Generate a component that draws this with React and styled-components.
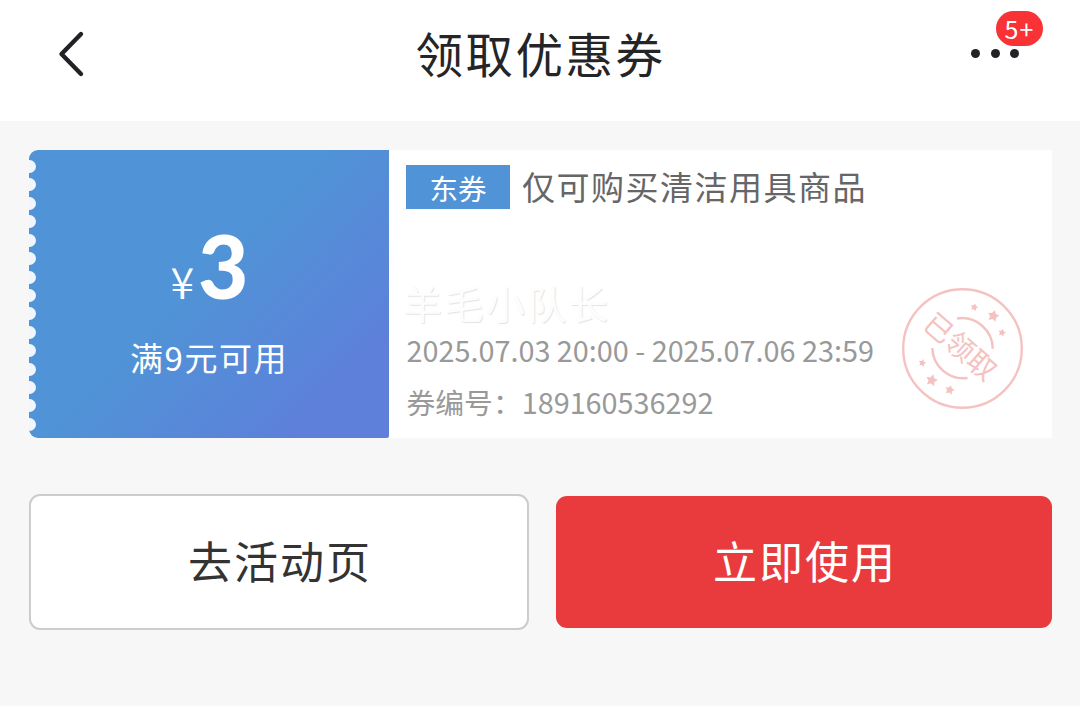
import React from "react";
import styled, { createGlobalStyle } from "styled-components";

const HOLES = 15;

const STARS = [
  { x: 84.3, y: 32.3, r: 4 },
  { x: 103.3, y: 41, r: 6.2 },
  { x: 112, y: 57.7, r: 4 },
  { x: 32.3, y: 88, r: 4 },
  { x: 41.7, y: 105.3, r: 6.2 },
  { x: 59.7, y: 115, r: 5 },
];

const starPoints = ({ x, y, r }) =>
  Array.from({ length: 10 }, (_, i) => {
    const radius = i % 2 ? r * 0.52 : r;
    const angle = (i * Math.PI) / 5 - Math.PI / 2 + 0.25;
    return `${x + radius * Math.cos(angle)},${y + radius * Math.sin(angle)}`;
  }).join(" ");

function ReceivedStamp() {
  return (
    <Stamp viewBox="10 11 125 125">
      <g fill="none" stroke="#f4c3c1" strokeWidth="2.4">
        <circle cx="72.5" cy="73.5" r="59.3" />
        <path d="M67 43.5A31 31 0 0 1 102.8 73.8" />
        <path d="M42.3 73A31 31 0 0 0 77.5 103" />
      </g>
      <g fill="#f4c3c1">
        {STARS.map((star) => (
          <polygon key={`${star.x}`} points={starPoints(star)} />
        ))}
      </g>
      <text
        transform="translate(70.3 71.5) rotate(41)"
        textAnchor="middle"
        y="10.5"
      >
        已领取
      </text>
    </Stamp>
  );
}

function App() {
  return (
    <Page>
      <GlobalStyle />
      <Header>
        <BackButton aria-label="返回">
          <svg width="30" height="50" viewBox="0 0 30 50">
            <path
              d="M25 5L5.5 25L25 45"
              fill="none"
              stroke="#222226"
              strokeWidth="4.4"
              strokeLinecap="round"
              strokeLinejoin="round"
            />
          </svg>
        </BackButton>
        <Title>领取优惠券</Title>
        <MoreButton aria-label="更多">
          <Dot />
          <Dot />
          <Dot />
          <Badge>5+</Badge>
        </MoreButton>
      </Header>
      <Main>
        <Coupon>
          <CouponValue>
            <Perforation>
              {Array.from({ length: HOLES }, (_, i) => (
                <Hole key={i} />
              ))}
            </Perforation>
            <ValueText>
              <Price>
                <Currency>¥</Currency>
                <Amount>3</Amount>
              </Price>
              <Condition>满9元可用</Condition>
            </ValueText>
          </CouponValue>
          <CouponInfo>
            <CouponTitle>
              <Tag>东券</Tag>
              <Scope>仅可购买清洁用具商品</Scope>
            </CouponTitle>
            <Watermark>羊毛小队长</Watermark>
            <Detail>2025.07.03 20:00 - 2025.07.06 23:59</Detail>
            <Detail>券编号：189160536292</Detail>
          </CouponInfo>
          <ReceivedStamp />
        </Coupon>
        <Actions>
          <ActionButton>去活动页</ActionButton>
          <ActionButton $primary>立即使用</ActionButton>
        </Actions>
      </Main>
    </Page>
  );
}

export default App;

const GlobalStyle = createGlobalStyle`
  * {
    box-sizing: border-box;
  }

  body {
    margin: 0;
    background: #f7f7f7;
    font-family: "Noto Sans CJK SC", sans-serif;
  }

  button {
    padding: 0;
    border: 0;
    background: none;
    font-family: inherit;
  }
`;

const Page = styled.div`
  display: flex;
  flex-direction: column;
  width: 1080px;
  height: 706px;
  overflow: hidden;
  background: #f7f7f7;
`;

const Header = styled.header`
  display: grid;
  grid-template-columns: 120px 1fr 120px;
  height: 121px;
  padding-bottom: 14px;
  background: #fff;
`;

const BackButton = styled.button`
  display: flex;
  align-items: center;
  padding-left: 56px;
`;

const Title = styled.h1`
  margin: 0;
  padding-left: 1px;
  color: #252527;
  font-size: 47.5px;
  font-weight: 400;
  line-height: 106px;
  letter-spacing: 2.5px;
  text-align: center;
`;

const MoreButton = styled.button`
  position: relative;
  display: flex;
  align-items: center;
  gap: 10.5px;
  padding-left: 11px;
`;

const Dot = styled.span`
  width: 9px;
  height: 9px;
  border-radius: 50%;
  background: #222226;
`;

const Badge = styled.span`
  position: absolute;
  top: 11px;
  left: 36px;
  width: 47px;
  height: 35px;
  border-radius: 18px;
  background: #f93236;
  color: #fff;
  font-size: 25px;
  line-height: 34px;
  letter-spacing: 1px;
  text-align: center;
`;

const Main = styled.main`
  display: flex;
  flex-direction: column;
  gap: 56px;
  padding: 29px 28px 0 29px;
`;

const Coupon = styled.section`
  display: flex;
  height: 288px;
  background: linear-gradient(to right, #f7f7f7 20px, #fff 20px);
`;

const CouponValue = styled.div`
  display: flex;
  width: 360px;
  overflow: hidden;
  border-radius: 9px 0 2px 9px;
  background: linear-gradient(135deg, #5093d6 46%, #5789d9 67%, #5e7fda 85%);
  color: #fff;
`;

const Perforation = styled.div`
  display: flex;
  flex-direction: column;
  justify-content: space-between;
  width: 8px;
  height: 271px;
  margin-top: 10px;
`;

const Hole = styled.i`
  width: 13px;
  height: 13px;
  margin-left: -6px;
  border-radius: 50%;
  background: #f1f6fd;
`;

const ValueText = styled.div`
  flex: 1;
  display: flex;
  flex-direction: column;
  align-items: center;
  padding-right: 8px;
`;

const Price = styled.div`
  display: flex;
  align-items: baseline;
  gap: 4px;
  height: 180px;
  padding: 56px 3px 0 0;
  line-height: 120px;
`;

const Currency = styled.span`
  font-size: 43px;
  font-weight: 350;
`;

const Amount = styled.span`
  font-family: Lato, sans-serif;
  font-size: 87px;
  font-weight: 900;
  letter-spacing: -4px;
`;

const Condition = styled.p`
  margin: 0;
  font-size: 33px;
  line-height: 55px;
  letter-spacing: 1.5px;
`;

const CouponInfo = styled.div`
  flex: 1;
  padding: 15px 0 0 17px;
`;

const CouponTitle = styled.div`
  display: flex;
  align-items: center;
  height: 44px;
  gap: 12px;
`;

const Tag = styled.span`
  width: 104px;
  height: 44px;
  background: #5093d6;
  color: #fff;
  font-size: 28.5px;
  line-height: 46px;
  text-align: center;
`;

const Scope = styled.span`
  height: 44px;
  color: #666;
  font-size: 33px;
  line-height: 42px;
  letter-spacing: 1.5px;
`;

const Watermark = styled.p`
  margin: 67px 0 0 -3px;
  color: #fdfdfe;
  font-size: 39px;
  line-height: 53px;
  letter-spacing: 2.5px;
  text-shadow: 1px 1px 1px #e3e3e7;
`;

const Detail = styled.p`
  margin: 0;
  padding-left: 0.5px;
  color: #999;
  font-size: 28.8px;
  line-height: 52px;
  white-space: nowrap;

  ${Watermark} + & {
    margin-top: -5px;
  }
`;

const Stamp = styled.svg`
  flex: none;
  width: 125px;
  height: 125px;
  margin: 136px 27px 0 0;

  text {
    fill: #f4c3c1;
    font-size: 28.5px;
    font-weight: 400;
  }
`;

const Actions = styled.div`
  display: flex;
  align-items: center;
  gap: 27px;
`;

const ActionButton = styled.button`
  flex: none;
  width: ${({ $primary }) => ($primary ? "496px" : "500px")};
  height: ${({ $primary }) => ($primary ? "132px" : "136px")};
  padding: 0 0 5px 2px;
  border: ${({ $primary }) => ($primary ? "0" : "2px solid #ccc")};
  border-radius: 11px;
  background: ${({ $primary }) => ($primary ? "#e93b3d" : "#fff")};
  color: ${({ $primary }) => ($primary ? "#fff" : "#333")};
  font-size: 44px;
  letter-spacing: 2px;
`;
